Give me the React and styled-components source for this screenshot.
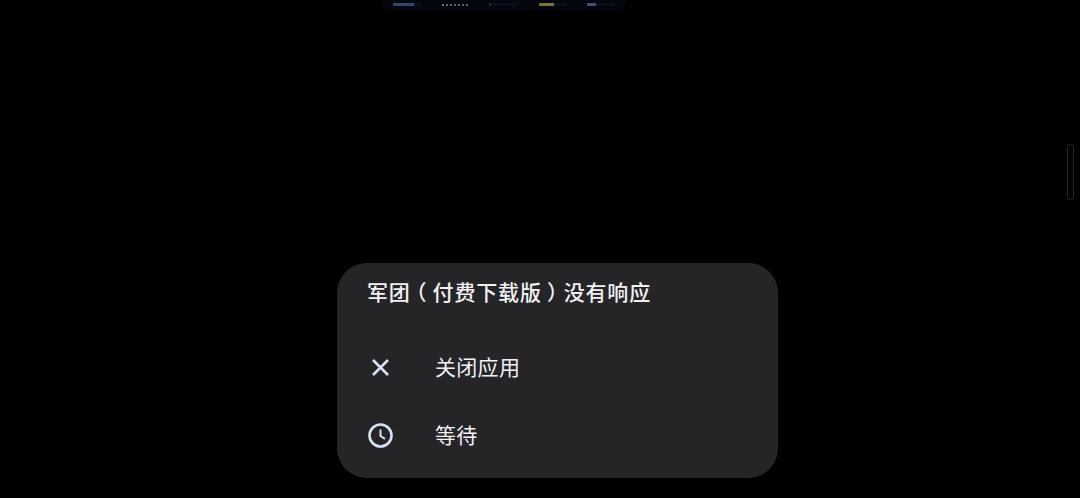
import styled, { createGlobalStyle } from "styled-components";

const GlobalStyle = createGlobalStyle`
  html, body {
    margin: 0;
    padding: 0;
    background: #000;
    overflow: hidden;
  }
`

const Screen = styled.div`
  position: relative;
  width: 1080px;
  height: 498px;
  background: #000;
  display: flex;
  flex-direction: column;
  justify-content: space-between;
  font-family: "Noto Sans CJK SC", "Noto Sans", sans-serif;
`

const Strip = styled.div`
  width: 243px;
  height: 10px;
  margin-left: 382px;
  padding: 3px 10px 0 11px;
  box-sizing: border-box;
  background: #03050f;
  border-radius: 0 0 7px 7px;
  display: flex;
  justify-content: space-between;
`

const StripBar = styled.div`
  width: ${props => props.$w}px;
  height: 3px;
  background: #0c0f1a;
  border-radius: 1px;
  overflow: hidden;
`

const StripFill = styled.div`
  height: 100%;
  background: ${props => props.$color};
`

const Dots = styled.div`
  width: 27px;
  height: 4px;
  display: flex;
  gap: 2px;
  align-items: center;
`

const Dot = styled.span`
  width: 2px;
  height: 2px;
  background: ${props => props.$color};
`

const ScrollHandle = styled.div`
  position: absolute;
  left: 1067px;
  top: 144px;
  width: 7px;
  height: 56px;
  box-sizing: border-box;
  border: 1px solid #2a2a2c;
  border-radius: 4px;
`

const Dialog = styled.div`
  width: 441px;
  height: 215px;
  margin: 0 0 20px 337px;
  padding-top: 13px;
  box-sizing: border-box;
  background: #252527;
  border-radius: 30px;
  color: #f1f1f3;
`

const Title = styled.div`
  height: 30px;
  padding-left: 30px;
  font-size: 21px;
  line-height: 30px;
  font-weight: 500;
  letter-spacing: 0.85px;
  white-space: nowrap;
  margin-bottom: 27px;
`

/* the fullwidth brackets sit in the middle of their cell in the reference */
const Bracket = styled.span`
  font-feature-settings: "halt";
  margin: 0 5.25px;
`

const Row = styled.div`
  height: 68px;
  display: flex;
  align-items: center;
  padding-left: 30px;
`

const IconSlot = styled.div`
  width: 68px;
  display: flex;
  color: #d8e2f4;
`

const RowLabel = styled.span`
  font-size: 21px;
  letter-spacing: 0.3px;
  line-height: 30px;
  padding-bottom: 3px;
`

const CloseIcon = () => (
  <svg width="27" height="27" viewBox="0 0 27 27" fill="none" stroke="currentColor" strokeWidth="2.6">
    <path d="M6 6 L21 21 M21 6 L6 21" />
  </svg>
)

const ClockIcon = () => (
  <svg width="27" height="27" viewBox="0 0 27 27" fill="none" stroke="currentColor" strokeWidth="2.6">
    <circle cx="13.5" cy="13.5" r="11" />
    <path d="M13.5 7.5 V14 L18 16.8" strokeWidth="2" />
  </svg>
)

export default function App() {
  return (
    <Screen>
      <GlobalStyle />
      <Strip>
        <StripBar $w={28}><StripFill $color="#31486b" style={{ width: "75%" }} /></StripBar>
        <Dots>
          <Dot $color="#77733a" />
          <Dot $color="#5d6475" />
          <Dot $color="#5d6475" />
          <Dot $color="#5d6475" />
          <Dot $color="#5d6475" />
          <Dot $color="#5d6475" />
          <Dot $color="#5d6475" />
        </Dots>
        <StripBar $w={29}><StripFill $color="#262c3c" style={{ width: "7%" }} /></StripBar>
        <StripBar $w={28}><StripFill $color="#777532" style={{ width: "55%" }} /></StripBar>
        <StripBar $w={28}><StripFill $color="#3b5377" style={{ width: "32%" }} /></StripBar>
      </Strip>
      <ScrollHandle />
      <Dialog>
        <Title>军团<Bracket>（</Bracket>付费下载版<Bracket>）</Bracket>没有响应</Title>
        <Row>
          <IconSlot><CloseIcon /></IconSlot>
          <RowLabel>关闭应用</RowLabel>
        </Row>
        <Row>
          <IconSlot><ClockIcon /></IconSlot>
          <RowLabel>等待</RowLabel>
        </Row>
      </Dialog>
    </Screen>
  )
}
